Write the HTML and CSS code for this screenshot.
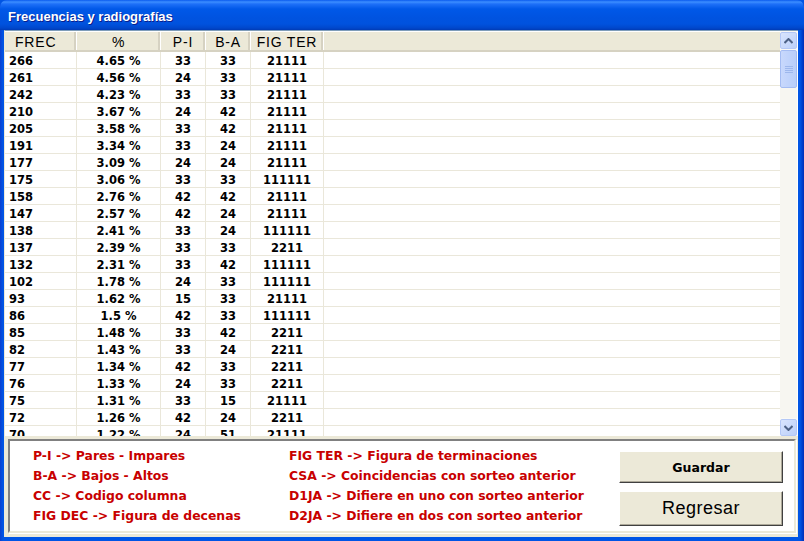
FILE: index.html
```html
<!DOCTYPE html>
<html>
<head>
<meta charset="utf-8">
<link rel="stylesheet" href="styles.css">
</head>
<body>
<div class="window">
  <div class="titlebar"><span class="title">Frecuencias y radiografías</span></div>
  <div class="client">
    <div class="listview">
      <div class="lv-main">
        <div class="lv-header">
          <div class="hc c1 left">FREC</div>
          <div class="hc c2">%</div>
          <div class="hc c3">P-I</div>
          <div class="hc c4">B-A</div>
          <div class="hc c5">FIG TER</div>
          <div class="hc filler"></div>
        </div>
        <div class="lv-body" id="body"></div>
      </div>
      <div class="vscroll">
        <div class="sbtn up"><svg width="9" height="6" viewBox="0 0 9 6"><path d="M0.5 5 L4.5 1 L8.5 5" fill="none" stroke="#4D6185" stroke-width="2"/></svg></div>
        <div class="thumb"><svg width="8" height="8" viewBox="0 0 8 8"><path d="M0 1.5H8M0 3.5H8M0 5.5H8M0 7.5H8" stroke="#9DB7EC" stroke-width="1"/></svg></div>
        <div class="track"></div>
        <div class="sbtn down"><svg width="9" height="6" viewBox="0 0 9 6"><path d="M0.5 1 L4.5 5 L8.5 1" fill="none" stroke="#4D6185" stroke-width="2"/></svg></div>
      </div>
    </div>
    <div class="bottom">
      <div class="legend">
        <div class="lcol">
          <div>P-I -&gt; Pares - Impares</div>
          <div>B-A -&gt; Bajos - Altos</div>
          <div>CC -&gt; Codigo columna</div>
          <div>FIG DEC -&gt; Figura de decenas</div>
        </div>
        <div class="lcol">
          <div>FIG TER -&gt; Figura de terminaciones</div>
          <div>CSA -&gt; Coincidencias con sorteo anterior</div>
          <div>D1JA -&gt; Difiere en uno con sorteo anterior</div>
          <div>D2JA -&gt; Difiere en dos con sorteo anterior</div>
        </div>
      </div>
      <div class="buttons">
        <button class="btn small">Guardar</button>
        <button class="btn big">Regresar</button>
      </div>
    </div>
  </div>
</div>
<script>
var rows = [
["266","4.65 %","33","33","21111"],
["261","4.56 %","24","33","21111"],
["242","4.23 %","33","33","21111"],
["210","3.67 %","24","42","21111"],
["205","3.58 %","33","42","21111"],
["191","3.34 %","33","24","21111"],
["177","3.09 %","24","24","21111"],
["175","3.06 %","33","33","111111"],
["158","2.76 %","42","42","21111"],
["147","2.57 %","42","24","21111"],
["138","2.41 %","33","24","111111"],
["137","2.39 %","33","33","2211"],
["132","2.31 %","33","42","111111"],
["102","1.78 %","24","33","111111"],
["93","1.62 %","15","33","21111"],
["86","1.5 %","42","33","111111"],
["85","1.48 %","33","42","2211"],
["82","1.43 %","33","24","2211"],
["77","1.34 %","42","33","2211"],
["76","1.33 %","24","33","2211"],
["75","1.31 %","33","15","21111"],
["72","1.26 %","42","24","2211"],
["70","1.22 %","24","51","21111"]
];
var b = document.getElementById('body');
var h = '';
rows.forEach(function(r){
  h += '<div class="row"><div class="c c1 left">'+r[0]+'</div><div class="c c2">'+r[1]+'</div><div class="c c3">'+r[2]+'</div><div class="c c4">'+r[3]+'</div><div class="c c5">'+r[4]+'</div><div class="c filler"></div></div>';
});
b.innerHTML = h;
</script>
</body>
</html>
```

FILE: styles.css
```css
* { box-sizing: border-box; }
html, body { margin: 0; padding: 0; }
body { width: 804px; height: 541px; overflow: hidden; background: #0054E3; }

.window {
  width: 804px;
  height: 541px;
  display: flex;
  flex-direction: column;
  background: linear-gradient(to right, #0A3FD0 0, #0055E5 3px, #0055E5 calc(100% - 4px), #002FB8 100%);
  border-radius: 7px 7px 0 0;
  overflow: hidden;
}

.titlebar {
  height: 30px;
  flex: none;
  background: linear-gradient(to bottom, #0A5BEE 0, #3C8EFF 2px, #1E70F8 4px, #0058E8 9px, #0053E0 18px, #0052DE 24px, #0047CC 28px, #003BB5 30px);
  display: flex;
  align-items: center;
  padding-left: 8px;
  padding-top: 2px;
}
.title {
  font-family: "Liberation Sans", Arial, sans-serif;
  font-weight: bold;
  font-size: 13px;
  color: #fff;
  text-shadow: 1px 1px 0 #0A1E8C;
}

.client {
  flex: 1;
  margin: 0 6px 4px 4px;
  background: #ECE9D8;
  display: flex;
  flex-direction: column;
}

.listview {
  height: 406px;
  flex: none;
  display: flex;
  border-top: 1px solid #7F9DB9;
  border-left: 1px solid #ECE9D8;
  background: #fff;
}
.lv-main { flex: 1; display: flex; flex-direction: column; overflow: hidden; }

.lv-header {
  height: 21px;
  flex: none;
  display: flex;
  background: #ECE9D8;
  border-bottom: 2px solid #D6D2C2;
  border-top: 1px solid #fff;
}
.hc {
  font-family: "Liberation Sans", Arial, sans-serif;
  font-size: 14px;
  letter-spacing: 0.8px;
  color: #000;
  display: flex;
  align-items: center;
  justify-content: center;
  border-right: 1px solid #fff;
  box-shadow: inset -2px 0 0 #D6D2C2;
  height: 100%;
  padding-top: 1px;
}
.hc.left { justify-content: flex-start; padding-left: 10px; }
.hc.filler { flex: 1; box-shadow: none; border-right: none; }

.c1 { width: 72px; flex: none; }
.c2 { width: 84px; flex: none; }
.c3 { width: 45px; flex: none; }
.c4 { width: 45px; flex: none; }
.c5 { width: 73px; flex: none; }

.lv-body { flex: 1; overflow: hidden; }
.row {
  height: 17px;
  display: flex;
  border-bottom: 1px solid #EAE7DA;
}
.c {
  font-family: "DejaVu Sans", Verdana, sans-serif;
  font-weight: bold;
  font-size: 11.5px;
  color: #000;
  display: flex;
  align-items: center;
  justify-content: center;
  border-right: 1px solid #EAE7DA;
  height: 16px;
  padding-top: 1px;
}
.c.left { justify-content: flex-start; padding-left: 4px; }
.c.filler { flex: 1; border-right: none; }

.vscroll {
  width: 17px;
  flex: none;
  display: flex;
  flex-direction: column;
  background: #FAF9F5;
  margin-right: 1px;
}
.sbtn {
  height: 17px;
  flex: none;
  background: linear-gradient(to bottom right, #D9E5FD, #BBCFF9);
  border: 1px solid #B4C8F6;
  border-radius: 2px;
  display: flex;
  align-items: center;
  justify-content: center;
  margin-top: 1px;
}
.thumb {
  height: 38px;
  flex: none;
  margin-top: 1px;
  background: linear-gradient(to right, #C8D8FC, #B8CEFA);
  border: 1px solid #A4BCF2;
  border-radius: 2px;
  display: flex;
  align-items: center;
  justify-content: center;
}
.track { flex: 1; background: #F7F6F1; }

.bottom {
  margin: 3px 2px 0 4px;
  height: 94px;
  flex: none;
  background: #fff;
  border-top: 2px solid #808080;
  border-left: 2px solid #808080;
  border-right: 2px solid #ECE9D8;
  border-bottom: 2px solid #ECE9D8;
  box-shadow: inset -1px -1px 0 #fff, 1px 1px 0 #fff;
  display: flex;
}

.legend {
  display: flex;
  padding: 5px 0 0 23px;
  font-family: "DejaVu Sans", Verdana, sans-serif;
  font-weight: bold;
  font-size: 12.4px;
  color: #C80000;
  width: 603px;
}
.lcol { display: flex; flex-direction: column; white-space: nowrap; }
.lcol div { height: 20px; line-height: 20px; }
.lcol:first-child { width: 256px; }

.buttons {
  display: flex;
  flex-direction: column;
  padding: 10px 0 0 6px;
  gap: 8px;
}
.btn {
  width: 164px;
  background: #ECE9D8;
  border: none;
  border-top: 1px solid #fff;
  border-left: 1px solid #fff;
  border-right: 1px solid #404040;
  border-bottom: 1px solid #404040;
  box-shadow: inset -1px -1px 0 #ACA899;
  font-family: "Liberation Sans", Arial, sans-serif;
  color: #000;
  padding: 0;
  margin: 0;
}
.btn.small { font-family: "DejaVu Sans", Verdana, sans-serif; font-weight: bold; font-size: 12.5px; height: 32px; }
.btn.big { font-size: 18px; letter-spacing: 0.5px; height: 35px; }
```
